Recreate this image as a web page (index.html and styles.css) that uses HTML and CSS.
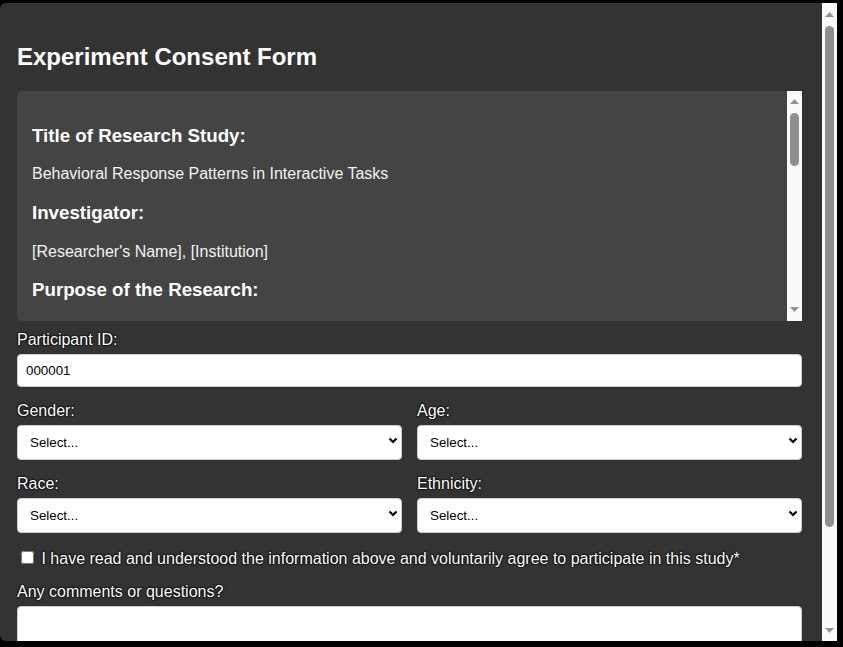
FILE: index.html
```html
<!DOCTYPE html>
<html lang="en">
<head>
<meta charset="utf-8">
<title>Experiment Consent Form</title>
<link rel="stylesheet" href="styles.css">
</head>
<body>
<div class="modal">
  <div class="modal-body">
    <h2 class="modal-title">Experiment Consent Form</h2>
    <div class="consent-box">
      <div class="consent-text">
        <h3>Title of Research Study:</h3>
        <p>Behavioral Response Patterns in Interactive Tasks</p>
        <h3>Investigator:</h3>
        <p>[Researcher's Name], [Institution]</p>
        <h3>Purpose of the Research:</h3>
        <p>You are invited to take part in a research study examining how people respond to and make decisions during short interactive computer-based tasks.</p>
        <h3>Procedures:</h3>
        <p>If you agree to participate, you will complete a series of brief tasks on this computer and answer a few short questions.</p>
      </div>
      <div class="scrollbar">
        <div class="sb-btn"><svg width="9" height="5" viewBox="0 0 9 5"><path d="M0 5 L4.5 0 L9 5 Z" fill="#939393"/></svg></div>
        <div class="sb-thumb sb-thumb-inner"></div>
        <div class="sb-spacer"></div>
        <div class="sb-btn"><svg width="9" height="5" viewBox="0 0 9 5"><path d="M0 0 L9 0 L4.5 5 Z" fill="#939393"/></svg></div>
      </div>
    </div>

    <form class="consent-form">
      <div class="form-group">
        <label class="field-label" for="pid">Participant ID:</label>
        <input class="field" id="pid" type="text" value="000001">
      </div>

      <div class="form-row">
        <div class="form-group col">
          <label class="field-label" for="gender">Gender:</label>
          <div class="select-wrap">
            <select class="field select" id="gender">
              <option>Select...</option>
              <option>Female</option>
              <option>Male</option>
              <option>Non-binary</option>
              <option>Prefer not to say</option>
            </select>
            <svg class="chevron" width="10" height="7" viewBox="0 0 10 7"><path d="M1.5 1.5 L5 5 L8.5 1.5" fill="none" stroke="#000" stroke-width="2.2"/></svg>
          </div>
        </div>
        <div class="form-group col">
          <label class="field-label" for="age">Age:</label>
          <div class="select-wrap">
            <select class="field select" id="age">
              <option>Select...</option>
              <option>18-24</option>
              <option>25-34</option>
              <option>35-44</option>
              <option>45+</option>
            </select>
            <svg class="chevron" width="10" height="7" viewBox="0 0 10 7"><path d="M1.5 1.5 L5 5 L8.5 1.5" fill="none" stroke="#000" stroke-width="2.2"/></svg>
          </div>
        </div>
      </div>

      <div class="form-row">
        <div class="form-group col">
          <label class="field-label" for="race">Race:</label>
          <div class="select-wrap">
            <select class="field select" id="race">
              <option>Select...</option>
            </select>
            <svg class="chevron" width="10" height="7" viewBox="0 0 10 7"><path d="M1.5 1.5 L5 5 L8.5 1.5" fill="none" stroke="#000" stroke-width="2.2"/></svg>
          </div>
        </div>
        <div class="form-group col">
          <label class="field-label" for="ethnicity">Ethnicity:</label>
          <div class="select-wrap">
            <select class="field select" id="ethnicity">
              <option>Select...</option>
            </select>
            <svg class="chevron" width="10" height="7" viewBox="0 0 10 7"><path d="M1.5 1.5 L5 5 L8.5 1.5" fill="none" stroke="#000" stroke-width="2.2"/></svg>
          </div>
        </div>
      </div>

      <div class="form-group checkbox-group">
        <input class="check" type="checkbox" id="agree"> <label class="check-label" for="agree">I have read and understood the information above and voluntarily agree to participate in this study*</label>
      </div>

      <div class="form-group">
        <label class="field-label" for="comments">Any comments or questions?</label>
        <textarea class="field textarea" id="comments" rows="4"></textarea>
      </div>
    </form>
  </div>
  <div class="scrollbar">
    <div class="sb-btn"><svg width="9" height="5" viewBox="0 0 9 5"><path d="M0 5 L4.5 0 L9 5 Z" fill="#939393"/></svg></div>
    <div class="sb-thumb sb-thumb-outer"></div>
    <div class="sb-spacer"></div>
    <div class="sb-btn"><svg width="9" height="5" viewBox="0 0 9 5"><path d="M0 0 L9 0 L4.5 5 Z" fill="#939393"/></svg></div>
  </div>
</div>
</body>
</html>
```

FILE: styles.css
```css
html, body {
  margin: 0;
  padding: 0;
  background: #000;
}

body {
  font-family: "Liberation Sans", Arial, sans-serif;
  color: #fff;
}

.modal {
  display: flex;
  width: 837px;
  height: 638px;
  margin-top: 3px;
  background: #333;
  border-radius: 6px 0 0 6px;
  overflow: hidden;
}

.modal-body {
  flex: 1;
  min-width: 0;
  padding: 20px 20px 20px 17px;
  overflow: hidden;
}

.modal-title {
  font-size: 24px;
  margin: 0.83em 0;
  color: #fff;
}

/* fake scrollbars */
.scrollbar {
  flex: 0 0 15px;
  width: 15px;
  display: flex;
  flex-direction: column;
  align-items: center;
  background: #fafafa;
}

.sb-btn {
  height: 22px;
  flex: 0 0 22px;
  display: flex;
  align-items: center;
  justify-content: center;
}

.sb-btn svg {
  display: block;
}

.sb-thumb {
  width: 9px;
  border-radius: 4.5px;
  background: #8f8f8f;
}

.sb-thumb-outer {
  height: 501px;
  margin-top: 1px;
}

.sb-thumb-inner {
  height: 53px;
}

.sb-spacer {
  flex: 1;
}

.consent-box {
  display: flex;
  height: 230px;
  margin-bottom: 10px;
  background: #444;
  border-radius: 5px 0 0 5px;
  overflow: hidden;
}

.consent-text {
  flex: 1;
  min-width: 0;
  padding: 15px;
  overflow: hidden;
}

.consent-text h3 {
  font-size: 18.72px;
  margin: 18.72px 0;
  color: #fff;
}

.consent-text p {
  font-size: 16px;
  margin: 16px 0;
  color: #f2f2f2;
}

.form-group {
  margin-bottom: 15px;
}

.form-row {
  display: flex;
  gap: 15px;
}

.col {
  flex: 1;
  min-width: 0;
}

.field-label {
  display: block;
  margin-bottom: 5px;
  font-size: 16px;
  color: #fff;
  text-shadow: 0 0 2px #000, 0 0 2px #000, 0 0 1px #000;
}

.field {
  display: block;
  box-sizing: border-box;
  width: 100%;
  padding: 8px;
  border: 1px solid #ccc;
  border-radius: 4px;
  background: #fff;
  color: #000;
  font-family: "Liberation Sans", Arial, sans-serif;
  font-size: 13.33px;
}

.select-wrap {
  position: relative;
}

.select {
  -webkit-appearance: none;
  appearance: none;
  height: 35px;
  padding: 8px 24px 8px 12px;
}

.chevron {
  position: absolute;
  right: 4px;
  top: 12px;
  pointer-events: none;
}

.textarea {
  resize: vertical;
}

.checkbox-group {
  font-size: 16px;
}

.check {
  margin: 3px 3px 3px 4px;
}

.check-label {
  color: #fff;
  text-shadow: 0 0 2px #000, 0 0 2px #000, 0 0 1px #000;
}
```
